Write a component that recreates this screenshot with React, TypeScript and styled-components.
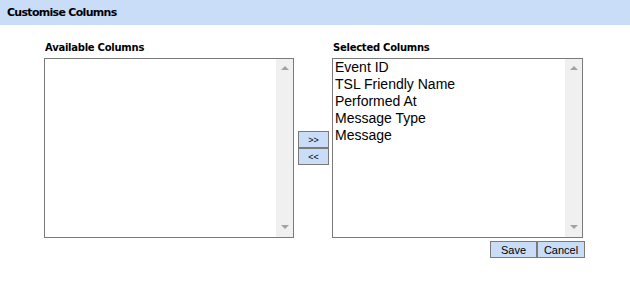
import React from 'react'
import styled, { createGlobalStyle } from 'styled-components'

const GlobalStyle = createGlobalStyle`
  body {
    margin: 0;
    background: #ffffff;
    font-family: "Liberation Sans", Arial, sans-serif;
  }
`

const Page = styled.div`
  width: 630px;
  height: 299px;
  background: #ffffff;
`

const Header = styled.div`
  height: 25px;
  background: #c9ddf9;
  display: flex;
  align-items: center;
  padding-left: 7px;
  font-family: "DejaVu Sans", sans-serif;
  font-weight: bold;
  font-size: 11px;
  letter-spacing: -0.7px;
  color: #000;
`

const Body = styled.div`
  display: flex;
  align-items: flex-start;
  padding: 16px 0 0 44px;
`

const Column = styled.div`
  display: flex;
  flex-direction: column;
`

const Label = styled.div`
  height: 16px;
  padding: 1px 0 0 1px;
  font-family: "DejaVu Sans", sans-serif;
  font-weight: bold;
  font-size: 10px;
  letter-spacing: -0.25px;
  color: #000;
`

const ListBox = styled.div<{ $width: number }>`
  width: ${(p) => p.$width}px;
  height: 180px;
  box-sizing: border-box;
  border: 1px solid #7a7a7a;
  display: flex;
  background: #fff;
`

const Items = styled.div`
  flex: 1;
  padding: 0 0 0 2px;
`

const Item = styled.div`
  height: 17px;
  line-height: 17px;
  font-size: 14px;
  color: #000;
`

const Track = styled.div`
  width: 17px;
  background: #f0f0f0;
  display: flex;
  flex-direction: column;
  justify-content: space-between;
  align-items: center;
  padding: 7px 0 8px;
`

const Arrow = styled.div<{ $down?: boolean }>`
  width: 0;
  height: 0;
  border-left: 4px solid transparent;
  border-right: 4px solid transparent;
  ${(p) =>
    p.$down
      ? 'border-top: 4px solid #a3a3a3;'
      : 'border-bottom: 4px solid #a3a3a3;'}
`

const MoveButtons = styled.div`
  height: 180px;
  display: flex;
  flex-direction: column;
  justify-content: center;
  margin: 17px 3px 0 4px;
`

const Button = styled.button<{ $width: number }>`
  width: ${(p) => p.$width}px;
  height: 17px;
  box-sizing: border-box;
  margin: 0;
  padding: 0;
  background: #c9ddf9;
  border: 1px solid #7a7a7a;
  font-family: "Liberation Sans", Arial, sans-serif;
  font-size: 11px;
  color: #000;
  line-height: 14px;
`

const SmallButton = styled(Button)`
  font-size: 9px;
`

const Actions = styled.div`
  display: flex;
  justify-content: flex-end;
  margin: 3px -2px 0 0;
`

const selected = ['Event ID', 'TSL Friendly Name', 'Performed At', 'Message Type', 'Message']

const Scroll = () => (
  <Track>
    <Arrow />
    <Arrow $down />
  </Track>
)

const App = () => {
  return (
    <Page>
      <GlobalStyle />
      <Header>Customise Columns</Header>
      <Body>
        <Column>
          <Label>Available Columns</Label>
          <ListBox $width={250}>
            <Items />
            <Scroll />
          </ListBox>
        </Column>
        <MoveButtons>
          <SmallButton $width={31}>&gt;&gt;</SmallButton>
          <SmallButton $width={31}>&lt;&lt;</SmallButton>
        </MoveButtons>
        <Column>
          <Label>Selected Columns</Label>
          <ListBox $width={251}>
            <Items>
              {selected.map((s) => (
                <Item key={s}>{s}</Item>
              ))}
            </Items>
            <Scroll />
          </ListBox>
          <Actions>
            <Button $width={47}>Save</Button>
            <Button $width={48}>Cancel</Button>
          </Actions>
        </Column>
      </Body>
    </Page>
  )
}

export default App
